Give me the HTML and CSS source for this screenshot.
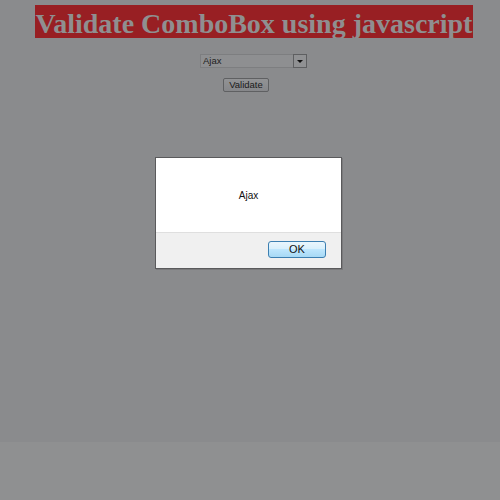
FILE: index.html
```html
<!DOCTYPE html>
<html>
<head>
<meta charset="utf-8">
<link rel="stylesheet" href="styles.css">
</head>
<body>
<div class="page">
  <div class="title-row"><h1 class="title">Validate ComboBox using javascript</h1></div>
  <div class="combo-row">
    <div class="combo">
      <div class="combo-field">Ajax</div>
      <div class="combo-btn"><span class="arrow"></span></div>
    </div>
  </div>
  <div class="btn-row"><div class="validate">Validate</div></div>
</div>
<div class="dialog">
  <div class="dialog-body">Ajax</div>
  <div class="dialog-foot"><div class="ok">OK</div></div>
</div>
</body>
</html>
```
FILE: styles.css
```css
html, body {
  margin: 0;
  padding: 0;
  background: #8f9091;
}
.page {
  height: 442px;
  background: #8a8b8d;
  padding-top: 5px;
  box-sizing: border-box;
}
.title-row {
  display: flex;
  justify-content: center;
  padding-left: 8px;
}
.title {
  margin: 0;
  background: #981f23;
  color: #8f8f90;
  font-family: "Liberation Serif", serif;
  font-weight: bold;
  font-size: 28px;
  height: 33px;
  line-height: 37px;
  padding: 0 1px;
  white-space: nowrap;
  overflow: hidden;
}
.combo-row {
  display: flex;
  justify-content: center;
  margin-top: 16px;
  padding-left: 7px;
}
.combo {
  display: flex;
  width: 107px;
  height: 14px;
}
.combo-field {
  flex: 1;
  border: 1px solid #7d7e80;
  border-right: none;
  background: #8e8f91;
  font-family: "Liberation Sans", Arial, sans-serif;
  font-size: 9.5px;
  line-height: 12px;
  color: #1e1e1e;
  padding-left: 2px;
}
.combo-btn {
  width: 12px;
  border: 1px solid #5e5f61;
  background: #909193;
  display: flex;
  align-items: center;
  justify-content: center;
}
.arrow {
  width: 0;
  height: 0;
  border-left: 3px solid transparent;
  border-right: 3px solid transparent;
  border-top: 3px solid #111;
}
.btn-row {
  display: flex;
  justify-content: center;
  margin-top: 10px;
  padding-right: 8px;
}
.validate {
  width: 44px;
  height: 12px;
  border: 1px solid #5f6062;
  border-radius: 2px;
  background: linear-gradient(#929395, #86878a);
  font-family: "Liberation Sans", Arial, sans-serif;
  font-size: 9.5px;
  line-height: 12px;
  text-align: center;
  color: #1a1a1a;
}
.dialog {
  position: absolute;
  left: 155px;
  top: 157px;
  width: 185px;
  height: 110px;
  border: 1px solid #5a5a5c;
  background: #fff;
  display: flex;
  flex-direction: column;
  box-shadow: 1px 1px 0 #7a7a7c;
}
.dialog-body {
  height: 74px;
  display: flex;
  align-items: center;
  justify-content: center;
  font-family: "Liberation Sans", Arial, sans-serif;
  font-size: 10px;
  color: #111;
  box-sizing: border-box;
}
.dialog-foot {
  flex: 1;
  background: #f0f0f0;
  border-top: 1px solid #dfdfdf;
  display: flex;
  justify-content: flex-end;
  align-items: center;
  padding-right: 15px;
}
.ok {
  width: 56px;
  height: 15px;
  border: 1px solid #3c7fb1;
  border-radius: 3px;
  background: linear-gradient(#eaf6fd 0%, #d9f0fc 45%, #bee6fd 50%, #a7d9f5 100%);
  font-family: "Liberation Sans", Arial, sans-serif;
  font-size: 11px;
  line-height: 15px;
  text-align: center;
  color: #111;
  margin-bottom: 2px;
}
```
